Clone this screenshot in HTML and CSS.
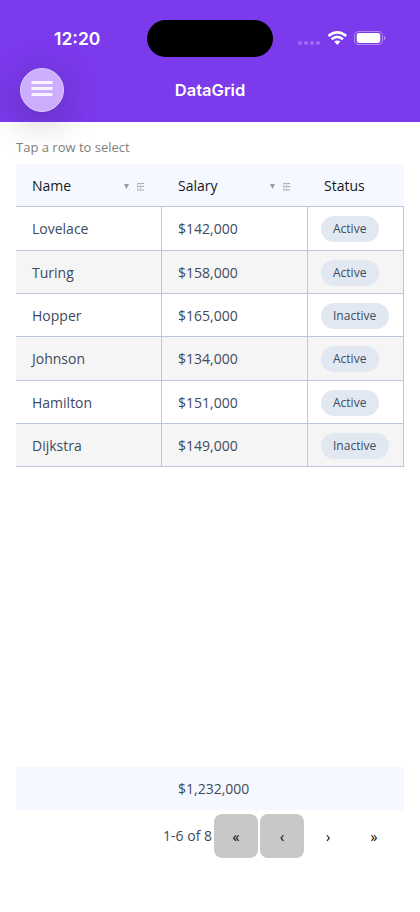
FILE: index.html
```
<!DOCTYPE html>
<html lang="en">
<head>
<meta charset="utf-8">
<title>DataGrid</title>
<link rel="stylesheet" href="styles.css">
</head>
<body>
<header class="top">
  <div class="statusbar">
    <span class="time">12:20</span>
    <span class="island"></span>
    <svg class="indicators" width="90" height="20" viewBox="0 0 90 20">
      <g fill="#fff" fill-opacity=".25"><circle cx="3" cy="15" r="2.1"/><circle cx="9" cy="15" r="2.1"/><circle cx="15" cy="15" r="2.1"/><circle cx="21" cy="15" r="2.1"/></g>
      <g fill="none" stroke="#fff" stroke-width="2.7"><path d="M31.4 8Q40.3.8 49.2 8"/><path d="M34.6 11.2Q40.3 6.5 46 11.2"/></g>
      <path d="M37.2 13.6Q40.3 11.2 43.4 13.6L40.3 16.9Z" fill="#fff"/>
      <rect x="57.5" y="3.5" width="28" height="13" rx="4.2" fill="none" stroke="#fff" stroke-opacity=".4"/>
      <rect x="59.7" y="5" width="23.6" height="10" rx="2.4" fill="#fff"/>
      <path d="M87 8c2 .6 2 3.4 0 4Z" fill="#fff" fill-opacity=".45"/>
    </svg>
  </div>
  <div class="navbar">
    <button class="menu" aria-label="Menu"><svg width="22" height="16" viewBox="0 0 22 16"><path d="M.5 1.5h21M.5 7.5h21M.5 13.5h21" stroke="#fbf2ff" stroke-width="3"/></svg></button>
    <h1 class="title">DataGrid</h1>
  </div>
</header>
<main class="page">
  <p class="hint">Tap a row to select</p>
  <section class="grid">
    <div class="row head">
      <div class="cell"><span class="label">Name</span><svg class="tools" width="21" height="8" viewBox="0 0 21 8"><path d="M0 1h5L2.5 6Z" fill="#939aa8"/><path d="M13 .5h7M13 3.5h7M13 7h7" stroke="#a2a7b2"/><path d="M13.5 0v7M16.5 0v7" stroke="#c8ccd5"/></svg></div>
      <div class="cell"><span class="label">Salary</span><svg class="tools" width="21" height="8" viewBox="0 0 21 8"><path d="M0 1h5L2.5 6Z" fill="#939aa8"/><path d="M13 .5h7M13 3.5h7M13 7h7" stroke="#a2a7b2"/><path d="M13.5 0v7M16.5 0v7" stroke="#c8ccd5"/></svg></div>
      <div class="cell"><span class="label">Status</span></div>
    </div>
    <div class="row"><div class="cell">Lovelace</div><div class="cell">$142,000</div><div class="cell status"><span class="chip">Active</span></div></div>
    <div class="row alt"><div class="cell">Turing</div><div class="cell">$158,000</div><div class="cell status"><span class="chip">Active</span></div></div>
    <div class="row"><div class="cell">Hopper</div><div class="cell">$165,000</div><div class="cell status"><span class="chip">Inactive</span></div></div>
    <div class="row alt"><div class="cell">Johnson</div><div class="cell">$134,000</div><div class="cell status"><span class="chip">Active</span></div></div>
    <div class="row"><div class="cell">Hamilton</div><div class="cell">$151,000</div><div class="cell status"><span class="chip">Active</span></div></div>
    <div class="row alt"><div class="cell">Dijkstra</div><div class="cell">$149,000</div><div class="cell status"><span class="chip">Inactive</span></div></div>
  </section>
  <div class="summary"><span></span><span class="total">$1,232,000</span></div>
  <nav class="pager">
    <span class="range">1-6 of 8</span>
    <button class="page-btn off">«</button>
    <button class="page-btn off">‹</button>
    <button class="page-btn">›</button>
    <button class="page-btn">»</button>
  </nav>
</main>
</body>
</html>
```
FILE: styles.css
```
* { box-sizing: border-box; }
body {
  margin: 0;
  height: 912px;
  display: flex;
  flex-direction: column;
  background: #fff;
  color: #3d4a60;
  font: 14px/20px "Open Sans", sans-serif;
}
button { border: 0; padding: 0; font: inherit; }
.top { height: 122px; background: #7c3aed; color: #fff; font-family: Inter, sans-serif; }
.statusbar {
  height: 68px;
  padding: 20px 32px 0 54px;
  display: flex;
  align-items: flex-start;
}
.time { width: 93px; font-size: 17.5px; font-weight: 600; line-height: 38px; }
.island { width: 126px; height: 37px; border-radius: 19px; background: #000; }
.indicators { margin: 8px 0 0 24px; flex: none; }
.navbar {
  height: 44px;
  padding: 0 20px;
  display: grid;
  grid-template-columns: 44px 1fr 44px;
  align-items: center;
}
.menu {
  width: 44px;
  height: 44px;
  border: 1px solid #dfcafc;
  border-radius: 50%;
  background: #cdaefe;
  box-shadow: 0 8px 40px rgba(0, 0, 0, .28);
  display: flex;
  justify-content: center;
  padding-top: 12px;
}
.title { margin: 0; text-align: center; font-size: 16.5px; line-height: 22px; font-weight: 600; }
.page { flex: 1; padding: 15px 16px 54px; display: flex; flex-direction: column; }
.hint { margin: 0 0 7px; color: #808080; font-size: 13px; line-height: 20px; }
.row {
  height: 43.333px;
  display: grid;
  grid-template-columns: 146px 146px 96px;
  border-bottom: 1px solid #bac5df;
}
.alt { background: #f5f5f5; }
.cell { display: flex; align-items: center; padding: 2px 16px 0; border-right: 1px solid #bac5df; }
.head { background: #f5f9ff; color: #16181d; }
.head .cell { border-color: transparent; }
.label { flex: 1; }
.tools { margin-top: 1px; }
.status { padding: 2px 0 0 13px; }
.chip {
  height: 26px;
  padding: 0 12.5px 0 12px;
  border-radius: 13px;
  background: #e2e8f2;
  font-size: 12px;
  line-height: 26px;
}
.summary {
  margin-top: auto;
  height: 43px;
  display: grid;
  grid-template-columns: 146px 1fr;
  align-items: center;
  background: #f5f9ff;
}
.total { padding-left: 16px; }
.pager { margin-top: 4px; padding-right: 8px; display: flex; align-items: center; justify-content: flex-end; gap: 2px; }
.page-btn { width: 44px; height: 44px; border-radius: 8px; background: none; color: #000; padding-top: 1px; }
.off { background: #c8c8c8; }
```
